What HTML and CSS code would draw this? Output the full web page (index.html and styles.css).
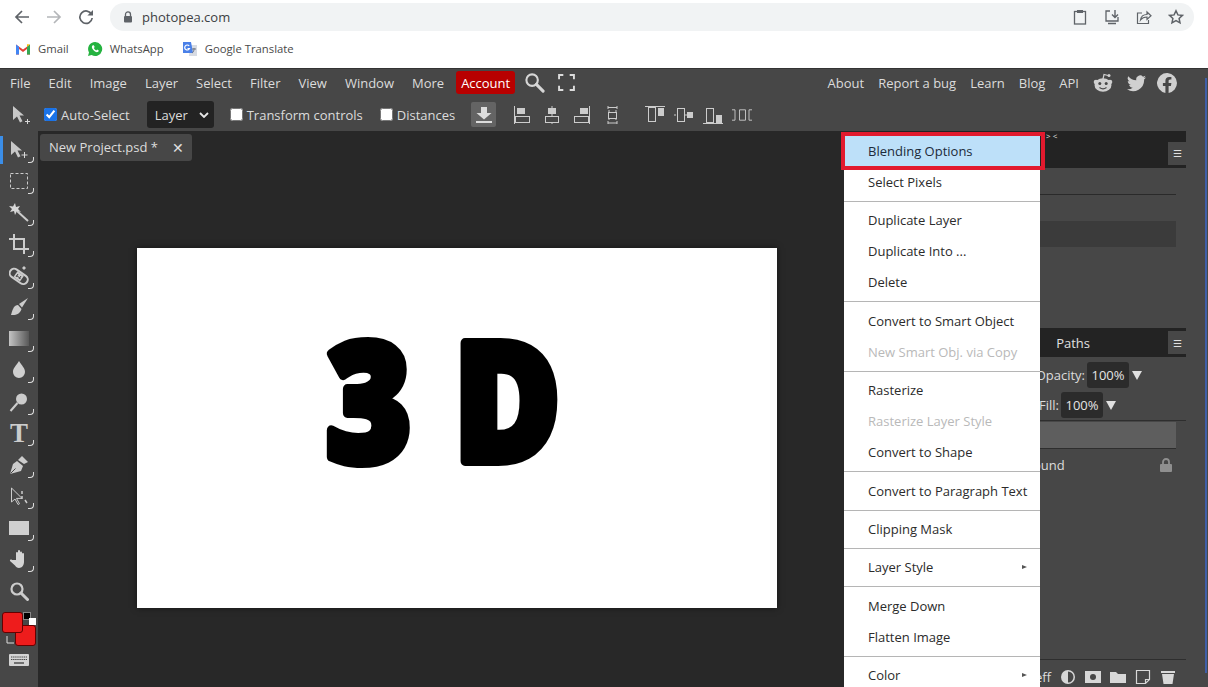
FILE: index.html
```html
<!DOCTYPE html>
<html lang="en">
<head>
    <meta charset="UTF-8">
    <meta name="viewport" content="width=device-width, initial-scale=1.0">
    <title>Photopea</title>
    <link rel="stylesheet" href="styles.css">
</head>
<body>
    <header class="browser">
        <div class="nav-row">
            <svg class="nav-ic" viewBox="0 0 16 16"><path d="M15 8H2M8 2 2 8l6 6" fill="none" stroke="#5f6368" stroke-width="1.7"/></svg>
            <svg class="nav-ic" viewBox="0 0 16 16"><path d="M1 8h13M8 2l6 6-6 6" fill="none" stroke="#b4b6b9" stroke-width="1.7"/></svg>
            <svg class="nav-ic" viewBox="0 0 16 16"><path d="M13.6 5.4A6.2 6.2 0 1 0 14.2 9" fill="none" stroke="#5f6368" stroke-width="1.7"/><path d="M15 1v5.6H9.4z" fill="#5f6368"/></svg>
            <div class="omnibox">
                <svg class="lock" viewBox="0 0 10 12"><path d="M2.5 5V3.4a2.5 2.5 0 0 1 5 0V5" fill="none" stroke="#5f6368" stroke-width="1.3"/><rect x="1" y="5" width="8" height="6.5" rx="1" fill="#5f6368"/></svg>
                <span class="url">photopea.com</span>
                <div class="omni-icons">
                    <svg class="omni-ic" viewBox="0 0 16 16"><rect x="2.5" y="2.5" width="11" height="12.5" fill="none" stroke="#5f6368" stroke-width="1.3"/><rect x="5" y="1" width="6" height="3" fill="#5f6368"/></svg>
                    <svg class="omni-ic" viewBox="0 0 16 16"><path d="M6 2H2v10h12V8" fill="none" stroke="#5f6368" stroke-width="1.3"/><path d="M11 1v7M8 5.5l3 3 3-3" fill="none" stroke="#5f6368" stroke-width="1.4"/><path d="M4 14.5h8" stroke="#5f6368" stroke-width="1.5"/></svg>
                    <svg class="omni-ic" viewBox="0 0 16 16"><path d="M6 4H1.5v10.500h11V11" fill="none" stroke="#5f6368" stroke-width="1.2"/><path d="M4.500 11c.5-4 3-5.500 6.500-5.500V3l4 3.800-4 3.700V8c-3 0-5 1-6.500 3z" fill="none" stroke="#5f6368" stroke-width="1.2"/></svg>
                    <svg class="omni-ic" viewBox="0 0 16 16"><path d="m8 1.800 1.900 4.100 4.500.5-3.300 3 .9 4.400L8 11.600l-4 2.200.9-4.400-3.300-3 4.500-.5z" fill="none" stroke="#5f6368" stroke-width="1.5"/></svg>
                </div>
            </div>
        </div>
        <div class="bookmarks">
            <span class="bookmark">
                <svg class="bm-ic" viewBox="0 0 16 13"><path d="M1 12V2l7 5 7-5v10h-3V6.500L8 9.500 4 6.500V12z" fill="#e34234"/><path d="M1 12V2l3 2.300V12z" fill="#4285f4"/><path d="M15 12V2l-3 2.300V12z" fill="#34a853"/><path d="m12 1.800 3 .2-3 2.300z" fill="#fbbc05"/></svg>
                Gmail
            </span>
            <span class="bookmark">
                <svg class="bm-ic" viewBox="0 0 16 16"><path d="M8 1a7 7 0 0 0-6 10.500L1 15l3.600-1A7 7 0 1 0 8 1z" fill="#25b340"/><path d="M5.500 4.500c-1 1-.8 2.600.6 4.300 1.500 1.800 3.300 2.800 4.600 2.300.8-.3 1.200-1 1-1.500L10.200 8.500l-1 .9C8.300 9 7.300 8 6.900 7l.8-1L6.800 4.300c-.4-.1-.9 0-1.300.2z" fill="#fff"/></svg>
                WhatsApp
            </span>
            <span class="bookmark">
                <svg class="bm-ic" viewBox="0 0 16 16"><path d="M8 4h7v11H7z" fill="#d7dbe3"/><path d="M1 1h8l2 11H1z" fill="#4a80e8"/><path d="M7.200 5A2.500 2.500 0 1 0 7.500 7.500H5.500" fill="none" stroke="#fff" stroke-width="1.200"/><path d="M10 8h4M12 7v1.500c-.3 2-1 3-2 3.500" fill="none" stroke="#6b7280" stroke-width="1"/></svg>
                Google Translate
            </span>
        </div>
    </header>

    <div class="app">
        <nav class="menubar">
            <span class="menu-item">File</span>
            <span class="menu-item">Edit</span>
            <span class="menu-item">Image</span>
            <span class="menu-item">Layer</span>
            <span class="menu-item">Select</span>
            <span class="menu-item">Filter</span>
            <span class="menu-item">View</span>
            <span class="menu-item">Window</span>
            <span class="menu-item">More</span>
            <span class="account">Account</span>
            <svg class="search-ic" viewBox="0 0 22 22"><circle cx="8.500" cy="8.500" r="6" fill="none" stroke="#d6d6d6" stroke-width="2.200"/><path d="m13 13 7 7" stroke="#d6d6d6" stroke-width="3.200" stroke-linecap="round"/></svg>
            <svg class="full-ic" viewBox="0 0 16 16"><path d="M1 5V1h4M11 1h4v4M15 11v4h-4M5 15H1v-4" fill="none" stroke="#dcdcdc" stroke-width="1.800"/></svg>
            <div class="menu-right">
                <span class="link">About</span>
                <span class="link">Report a bug</span>
                <span class="link">Learn</span>
                <span class="link">Blog</span>
                <span class="link">API</span>
                <svg class="social social-reddit" viewBox="0 0 20 20"><circle cx="3" cy="9" r="2.300" fill="#d0d0d0"/><circle cx="17" cy="9" r="2.300" fill="#d0d0d0"/><ellipse cx="10" cy="12" rx="8.500" ry="6.800" fill="#d0d0d0"/><path d="M10 6 11 1.500l4 1" fill="none" stroke="#d0d0d0" stroke-width="1.200"/><circle cx="16" cy="2.500" r="1.500" fill="#d0d0d0"/><circle cx="6.800" cy="10.500" r="1.500" fill="#474747"/><circle cx="13.200" cy="10.500" r="1.500" fill="#474747"/><path d="M6.500 14.500c2 1.500 5 1.500 7 0" fill="none" stroke="#474747" stroke-width="1.100"/></svg>
                <svg class="social social-twitter" viewBox="0 0 20 20"><path d="M20 4c-.7.300-1.500.600-2.400.700.9-.5 1.500-1.300 1.800-2.300-.8.500-1.700.8-2.600 1A4.100 4.100 0 0 0 9.800 7.200 11.600 11.600 0 0 1 1.400 2.900a4.100 4.100 0 0 0 1.300 5.500c-.7 0-1.300-.2-1.900-.5 0 2 1.400 3.700 3.300 4.100-.6.200-1.200.2-1.900.1.500 1.600 2 2.800 3.800 2.800A8.200 8.200 0 0 1 0 16.600 11.600 11.600 0 0 0 18 6.300c.8-.6 1.500-1.400 2-2.300z" fill="#d0d0d0"/></svg>
                <svg class="social" viewBox="0 0 20 20"><path d="M20 10a10 10 0 1 0-11.600 9.900v-7H5.900V10h2.500V7.800c0-2.500 1.500-3.900 3.800-3.900 1.100 0 2.200.2 2.200.2v2.500h-1.200c-1.200 0-1.600.8-1.600 1.600V10h2.800l-.5 2.900h-2.300v7A10 10 0 0 0 20 10z" fill="#d0d0d0"/></svg>
            </div>
        </nav>

        <div class="options">
            <svg class="opt-move" viewBox="0 0 20 20"><path d="M1 1v14l4-3.500 3 6 2.500-1.200-3-5.800H12z" fill="#c8c8c8"/><path d="M15.500 14v5M13 16.500h5" stroke="#d8d8d8" stroke-width="1"/></svg>
            <label class="check check-first"><input type="checkbox" checked>Auto-Select</label>
            <div class="select">Layer
                <svg class="chevron" viewBox="0 0 10 6"><path d="m1 1 4 4 4-4" fill="none" stroke="#e8e8e8" stroke-width="1.800"/></svg>
            </div>
            <label class="check"><input type="checkbox">Transform controls</label>
            <label class="check"><input type="checkbox">Distances</label>
            <span class="download">
                <svg viewBox="0 0 18 18" width="18" height="18"><path d="M6 1h6v6h4.500L9 13.500 1.500 7H6z" fill="#dcdcdc"/><path d="M1 16h16" stroke="#dcdcdc" stroke-width="2"/></svg>
            </span>
            <div class="aligns aligns-h">
                <svg viewBox="0 0 18 20"><path d="M1.500 1v18" stroke="#ccc"/><rect x="4" y="3" width="8" height="6" fill="#ccc"/><rect x="2.500" y="11.500" width="14" height="6" fill="none" stroke="#ccc"/></svg>
                <svg viewBox="0 0 18 20"><path d="M9 1v2M9 9v2M9 18v1" stroke="#ccc"/><rect x="5" y="3" width="8" height="6" fill="#ccc"/><rect x="2.500" y="11.500" width="13" height="6" fill="none" stroke="#ccc"/></svg>
                <svg viewBox="0 0 18 20"><path d="M16.500 1v18" stroke="#ccc"/><rect x="7" y="3" width="8" height="6" fill="#ccc"/><rect x="1.500" y="11.500" width="14" height="6" fill="none" stroke="#ccc"/></svg>
                <svg viewBox="0 0 18 20"><path d="M5 2.500h9M5 6h2M12 6h2M5 14h2M12 14h2M5 18h9M5 1v3M14 1v3M5 16v3M14 16v3" stroke="#ccc"/><rect x="5.500" y="7.500" width="8" height="6" fill="none" stroke="#ccc"/></svg>
            </div>
            <div class="aligns aligns-v">
                <svg viewBox="0 0 20 20"><path d="M0 1.500h20" stroke="#ccc"/><rect x="3.500" y="2.500" width="7" height="14" fill="none" stroke="#ccc"/><rect x="13" y="3" width="6" height="8" fill="#ccc"/></svg>
                <svg viewBox="0 0 20 20"><path d="M0 10h2M11 10h3" stroke="#ccc"/><rect x="3.500" y="3.500" width="7" height="13" fill="none" stroke="#ccc"/><rect x="13" y="7" width="6" height="6" fill="#ccc"/></svg>
                <svg viewBox="0 0 20 20"><path d="M0 18.500h20" stroke="#ccc"/><rect x="3.500" y="3.500" width="7" height="14" fill="none" stroke="#ccc"/><rect x="13" y="10" width="6" height="8" fill="#ccc"/></svg>
                <svg viewBox="0 0 20 20"><path d="M0 3.500h3v13H0M7.500 3.500h6v13h-6zM20 3.500h-3v13h3" transform="translate(0 2) scale(1 .8)" fill="none" stroke="#ccc"/></svg>
            </div>
        </div>

        <div class="workspace">
            <aside class="tools">
                <span class="tool tool-active"><svg viewBox="0 0 20 20"><path d="M2 1v14l4-3.500 3 6 2.500-1.200-3-5.800H13z" fill="#c8c8c8"/><path d="M15.500 12v6M12.500 15h6" stroke="#d8d8d8"/></svg></span>
                <span class="tool"><svg viewBox="0 0 20 20"><rect x="1.500" y="2.500" width="17" height="15" fill="none" stroke="#ccc" stroke-dasharray="3 2"/></svg></span>
                <span class="tool"><svg viewBox="0 0 20 20"><path d="m8 8 11 10" stroke="#ccc" stroke-width="2"/><path d="m6 0 1 4 4-1-2 3 3 3-4-1-2 4-1-4-4 1 2-3-3-3 4 .500z" fill="#d8d8d8"/></svg></span>
                <span class="tool"><svg viewBox="0 0 20 20"><path d="M5 0v15h15M0 5h15v15" fill="none" stroke="#ccc" stroke-width="2"/></svg></span>
                <span class="tool"><svg viewBox="0 0 20 20"><rect x="0" y="6" width="20" height="9" rx="4.500" transform="rotate(35 10 10)" fill="none" stroke="#ccc" stroke-width="2"/><rect x="6" y="7" width="8" height="7" transform="rotate(35 10 10)" fill="#ccc"/><path d="M7.500 9.500l4 3M9 8l-2 3M12 10l-2 3" stroke="#474747"/><path d="m15 0 2 2-2 2-2-2z" fill="#ccc"/></svg></span>
                <span class="tool"><svg viewBox="0 0 20 20"><path d="M19 1 10 7l3 3.500z" fill="#ccc"/><path d="M9 8c-4 .500-5 3-7 10 5 .500 9-1 10.500-6z" fill="#ccc"/></svg></span>
                <span class="tool gradient-tool"></span>
                <span class="tool"><svg viewBox="0 0 20 20"><path d="M10 1c-3 5-6 7-6 11a6 6 0 0 0 12 0c0-4-3-6-6-11z" fill="#d0d0d0"/></svg></span>
                <span class="tool"><svg viewBox="0 0 20 20"><circle cx="12.500" cy="7" r="5.500" fill="#ccc"/><path d="m8.500 11-7 8" stroke="#ccc" stroke-width="2"/></svg></span>
                <span class="tool type-tool">T</span>
                <span class="tool"><svg viewBox="0 0 20 20"><path d="m13 1 6 6-4 2-6-4z" fill="#ccc"/><path d="m8 6 6 5-2 5-11 3 3-10z" fill="#ccc"/><path d="m1.500 18.500 5-5" stroke="#474747"/></svg></span>
                <span class="tool"><svg viewBox="0 0 20 20"><path d="M2.500 2v14l3.500-3 3 5.500 1.500-.8-3-5.300H13z" fill="none" stroke="#ccc"/><path d="M13 5v3M13 10v3M16 14l2 3" stroke="#ccc" stroke-width="1.500"/></svg></span>
                <span class="tool"><span class="shape-rect"></span></span>
                <span class="tool"><svg viewBox="0 0 20 20"><path d="M7 11V4a1 1 0 0 1 2 0V2a1 1 0 0 1 2 0v1.500a1 1 0 0 1 2 0V5a1 1 0 0 1 2 0v8c0 3-2 6-5 6-2 0-3-1-4-2.500L1 12c-.5-1 1-2 2-1z" fill="#d4d4d4"/></svg></span>
                <span class="tool tool-plain"><svg viewBox="0 0 20 20"><circle cx="8" cy="8" r="5.500" fill="none" stroke="#ccc" stroke-width="2.200"/><path d="m12 12 6.500 6.500" stroke="#ccc" stroke-width="3" stroke-linecap="round"/></svg></span>
                <div class="swatches">
                    <span class="swatch-bg"></span>
                    <span class="swatch-fg"></span>
                    <span class="mini-black"></span>
                    <span class="mini-white"></span>
                    <svg class="swap" viewBox="0 0 10 10"><path d="M2 1v7h7" fill="none" stroke="#ddd"/></svg>
                </div>
                <svg class="keyboard" viewBox="0 0 20 12"><rect width="20" height="12" rx="1" fill="#d4d4d4"/><path d="M2 3h16M2 5.500h16" stroke="#474747" stroke-dasharray="1.400 .7"/><path d="M5 9h10" stroke="#474747" stroke-width="1.400"/></svg>
            </aside>

            <main class="doc">
                <div class="tab">New Project.psd *<span class="tab-close">✕</span></div>
                <div class="canvas">
                    <svg class="art" viewBox="0 0 640 360">
                        <text class="art-text" transform="scale(.88 1)" y="213"><tspan x="215">3</tspan> <tspan x="360">D</tspan></text>
                    </svg>
                </div>
            </main>

            <section class="panels">
                <div class="panel-tabs panel-tabs-top">
                    <span class="burger">☰</span>
                </div>
                <div class="panel-top">
                    <div class="panel-row-line"></div>
                    <div class="panel-field"></div>
                </div>
                <div class="panel-tabs panel-tabs-layers">
                    <span class="tab-label">Paths</span>
                    <span class="burger">☰</span>
                </div>
                <div class="blend-row blend-opacity">Opacity:<span class="num-box">100%</span><span class="tri"></span></div>
                <div class="blend-row blend-fill">Fill:<span class="num-box">100%</span><span class="tri"></span></div>
                <div class="layers-rule"></div>
                <div class="layer-selected"></div>
                <div class="layer-row">Background
                    <svg class="layer-lock" viewBox="0 0 12 14"><path d="M3 6V4a3 3 0 0 1 6 0v2" fill="none" stroke="#8f8f8f" stroke-width="1.800"/><rect y="6" width="12" height="8" rx="1" fill="#8f8f8f"/></svg>
                </div>
                <div class="panel-foot">
                    <span>eff</span>
                    <svg viewBox="0 0 16 16"><circle cx="8" cy="8" r="7" fill="#d8d8d8"/><path d="M8 2.500a5.500 5.500 0 0 1 0 11z" fill="#474747"/></svg>
                    <svg viewBox="0 0 16 16"><rect y="2" width="16" height="12" fill="#d8d8d8"/><circle cx="8" cy="8" r="3" fill="#474747"/></svg>
                    <svg viewBox="0 0 16 16"><path d="M0 3h6l2 2h8v9H0z" fill="#d8d8d8"/></svg>
                    <svg viewBox="0 0 16 16"><path d="M1.500 1.500h13v9l-4 4h-9zM10.500 14.500v-4h4" fill="none" stroke="#d8d8d8" stroke-width="1.200"/></svg>
                    <svg viewBox="0 0 16 16"><path d="M1 2h14v2H1zM2 5h12l-1.500 10h-9z" fill="#d8d8d8"/></svg>
                </div>
            </section>
            <div class="strip"></div>

            <div class="context-menu">
                <div class="ctx ctx-hover">Blending Options</div>
                <div class="ctx">Select Pixels</div>
                <div class="ctx-sep"></div>
                <div class="ctx">Duplicate Layer</div>
                <div class="ctx">Duplicate Into ...</div>
                <div class="ctx">Delete</div>
                <div class="ctx-sep"></div>
                <div class="ctx">Convert to Smart Object</div>
                <div class="ctx ctx-off">New Smart Obj. via Copy</div>
                <div class="ctx-sep"></div>
                <div class="ctx">Rasterize</div>
                <div class="ctx ctx-off">Rasterize Layer Style</div>
                <div class="ctx">Convert to Shape</div>
                <div class="ctx-sep"></div>
                <div class="ctx">Convert to Paragraph Text</div>
                <div class="ctx-sep"></div>
                <div class="ctx">Clipping Mask</div>
                <div class="ctx-sep"></div>
                <div class="ctx ctx-sub">Layer Style</div>
                <div class="ctx-sep"></div>
                <div class="ctx">Merge Down</div>
                <div class="ctx">Flatten Image</div>
                <div class="ctx-sep"></div>
                <div class="ctx ctx-sub">Color</div>
            </div>
            <div class="red-mark"></div>
            <span class="collapse-mark">&gt; &lt;</span>
        </div>
        <div class="edge-line"></div>
    </div>
</body>
</html>
```

FILE: styles.css
```css
html, body {
    height: 687px;
    overflow: hidden;
}

body {
    margin: 0;
    display: flex;
    flex-direction: column;
    font-family: "Open Sans", "Liberation Sans", sans-serif;
    font-size: 13px;
    background: #fff;
}

/* browser chrome */
.browser {
    height: 68px;
    flex: none;
    background: #fff;
}

.nav-row {
    height: 33px;
    display: flex;
    align-items: center;
    padding: 0 14px;
}

.nav-ic {
    width: 16px;
    height: 16px;
    margin-right: 16px;
}

.omnibox {
    flex: 1;
    height: 28px;
    padding: 0 10px 0 13px;
    display: flex;
    align-items: center;
    background: #f1f3f4;
    border-radius: 14px;
}

.lock {
    width: 10px;
    height: 12px;
    margin-right: 9px;
}

.url {
    color: #3c4043;
    font-size: 13px;
}

.omni-icons {
    margin-left: auto;
    display: flex;
    gap: 16px;
}

.omni-ic {
    width: 16px;
    height: 16px;
}

.bookmarks {
    height: 31px;
    display: flex;
    align-items: center;
    padding-left: 15px;
    gap: 18px;
}

.bookmark {
    display: flex;
    align-items: center;
    gap: 7px;
    color: #4a4a4a;
    font-size: 11.3px;
}

.bm-ic {
    width: 16px;
    height: 16px;
}

/* app shell */
.app {
    position: relative;
    flex: 1;
    display: flex;
    flex-direction: column;
    min-height: 0;
    background: #474747;
    color: #dcdcdc;
    border-top: 1px solid #333;
}

.menubar {
    height: 27px;
    padding: 0 0 2px 1px;
    flex: none;
    display: flex;
    align-items: center;
}

.menu-item {
    padding: 0 9px;
}

.account {
    margin-left: 3px;
    padding: 2.5px 5px;
    background: #b80000;
    border-radius: 3px;
    color: #fff;
}

.search-ic {
    width: 21px;
    height: 21px;
    margin-left: 9px;
}

.full-ic {
    width: 17px;
    height: 17px;
    margin-left: 13px;
}

.menu-right {
    margin-left: auto;
    display: flex;
    align-items: center;
    gap: 14px;
    padding-right: 31px;
}

.social {
    width: 20px;
    height: 20px;
}

.social-twitter {
    width: 19px;
    margin-right: -3px;
}

.options {
    height: 33px;
    flex: none;
    display: flex;
    align-items: center;
    padding-left: 12px;
}

.opt-move {
    width: 20px;
    height: 20px;
}

.check {
    display: flex;
    align-items: center;
    margin-left: 17px;
}

.check-first {
    margin-left: 12px;
}

.check input {
    width: 13px;
    height: 13px;
    margin: 0 4px 0 0;
    accent-color: #1a73e8;
}

.select {
    width: 67px;
    height: 27px;
    margin-left: 17px;
    margin-right: -1px;
    padding-left: 8px;
    box-sizing: border-box;
    display: flex;
    align-items: center;
    background: #232323;
    border-radius: 3px;
}

.chevron {
    width: 10px;
    height: 6px;
    margin-left: auto;
    margin-right: 5px;
}

.download {
    width: 25px;
    height: 25px;
    margin-left: 16px;
    display: grid;
    place-items: center;
    background: #646464;
    border-radius: 2px;
}

.aligns {
    display: flex;
}

.aligns svg {
    width: 18px;
    height: 20px;
}

.aligns-h {
    margin-left: 17px;
    gap: 12px;
}

.aligns-v {
    margin-left: 24px;
    gap: 9px;
}

.aligns-v svg {
    width: 20px;
}

/* workspace */
.workspace {
    position: relative;
    flex: 1;
    display: flex;
    min-height: 0;
}

.tools {
    width: 38px;
    flex: none;
    display: flex;
    flex-direction: column;
    align-items: center;
    background: #474747;
    padding-top: 3px;
}

.tool {
    position: relative;
    width: 38px;
    height: 31.5px;
    flex: none;
    display: flex;
    align-items: center;
    justify-content: center;
}

.tool svg {
    width: 20px;
    height: 20px;
}

.tool::after {
    content: "";
    position: absolute;
    right: 4px;
    bottom: 3px;
    width: 5px;
    height: 5px;
    border-right: 1px solid #ddd;
    border-bottom: 1px solid #ddd;
    border-bottom-right-radius: 4px;
}

.tool-plain::after {
    display: none;
}

.tool-active::before {
    content: "";
    position: absolute;
    left: 0;
    top: 2px;
    width: 3px;
    height: 28px;
    background: #3b8ee8;
}

.gradient-tool::before {
    content: "";
    width: 20px;
    height: 15px;
    background: linear-gradient(to right, #c4c4c4, #585858);
}

.type-tool {
    font-family: "Liberation Serif", serif;
    font-size: 27px;
    font-weight: 700;
    color: #ccc;
}

.shape-rect {
    width: 20px;
    height: 14px;
    background: #d0d0d0;
}

.swatches {
    position: relative;
    width: 38px;
    height: 38px;
    flex: none;
    margin-top: 5px;
}

.swatch-fg,
.swatch-bg,
.mini-black,
.mini-white {
    position: absolute;
    box-sizing: border-box;
}

.swatch-fg {
    left: 2px;
    top: 0;
    width: 21px;
    height: 21px;
    background: #ee1c1c;
    border: 1px solid #600;
    border-radius: 3px;
}

.swatch-bg {
    left: 15px;
    top: 13px;
    width: 21px;
    height: 21px;
    background: #ee1c1c;
    border: 1px solid #600;
    border-radius: 3px;
}

.mini-black {
    left: 23px;
    top: 0;
    width: 8px;
    height: 8px;
    background: #000;
    border: 1px solid #888;
}

.mini-white {
    left: 29px;
    top: 6px;
    width: 7px;
    height: 7px;
    background: #fff;
}

.swap {
    position: absolute;
    left: 5px;
    top: 23px;
    width: 10px;
    height: 10px;
}

.keyboard {
    width: 20px;
    height: 12px;
    margin-top: 4px;
}

.doc {
    flex: 1;
    min-width: 0;
    display: flex;
    flex-direction: column;
    align-items: flex-start;
    background: #282828;
}

.tab {
    height: 26px;
    margin: 3px 0 0 2px;
    padding: 0 8px 1px 9px;
    display: flex;
    align-items: center;
    background: #474747;
    border-radius: 3px;
}

.tab-close {
    margin-left: 14px;
    font-size: 14px;
    color: #e0e0e0;
}

.canvas {
    align-self: center;
    width: 640px;
    height: 360px;
    margin-top: 87px;
    background: #fff;
    box-shadow: 0 0 6px rgba(0, 0, 0, 0.5);
}

.art {
    display: block;
    width: 640px;
    height: 360px;
}

.art-text {
    font-family: "Open Sans", sans-serif;
    font-weight: 800;
    font-size: 165px;
    fill: #000;
    stroke: #000;
    stroke-width: 10px;
    stroke-linejoin: round;
}

.panels {
    width: 310px;
    flex: none;
    display: flex;
    flex-direction: column;
    background: #474747;
}

.panel-tabs {
    display: flex;
    align-items: center;
    justify-content: flex-end;
    background: #232323;
}

.panel-tabs-top {
    height: 37px;
}

.panel-tabs-layers {
    height: 29px;
}

.burger {
    width: 18px;
    height: 23px;
    display: grid;
    place-items: center;
    background: #474747;
    font-size: 10px;
    color: #e0e0e0;
}

.panel-tabs-top .burger {
    margin-top: 7px;
}

.panel-top {
    height: 160px;
}

.panel-row-line {
    height: 1px;
    margin: 26px 10px 0 0;
    background: #2a2a2a;
}

.panel-field {
    height: 26px;
    margin: 26px 10px 0 0;
    background: #3b3b3b;
}

.tab-label {
    margin-right: 78px;
    color: #e0e0e0;
}

.blend-row {
    flex: none;
    display: flex;
    align-items: center;
    justify-content: flex-end;
}

.blend-opacity {
    height: 36px;
    padding-right: 44px;
}

.blend-fill {
    height: 26px;
    margin-top: -1px;
    padding-right: 70px;
}

.num-box {
    width: 42px;
    height: 26px;
    margin: 0 3px 0 2px;
    display: grid;
    place-items: center;
    background: #2b2b2b;
    border-radius: 3px;
    color: #e4e4e4;
}

.tri {
    width: 0;
    height: 0;
    border-left: 5px solid transparent;
    border-right: 5px solid transparent;
    border-top: 9px solid #e0e0e0;
}

.layers-rule {
    height: 1px;
    flex: none;
    margin-top: 2px;
    background: #2e2e2e;
}

.layer-selected {
    height: 26px;
    flex: none;
    margin: 1px 10px 0 0;
    background: #5e5e5e;
    border-bottom: 1px solid #2e2e2e;
}

.layer-row {
    height: 32px;
    flex: none;
    display: flex;
    align-items: center;
    padding-left: 116px;
    padding-right: 14px;
}

.layer-lock {
    width: 12px;
    height: 14px;
    margin-left: auto;
}

.panel-foot {
    margin-top: auto;
    height: 21px;
    flex: none;
    display: flex;
    align-items: center;
    justify-content: flex-end;
    gap: 9px;
    padding: 6px 10px 0 0;
    border-top: 1px solid #2e2e2e;
}

.panel-foot svg {
    width: 16px;
    height: 16px;
}

.strip {
    width: 22px;
    flex: none;
    background: #474747;
}

.edge-line {
    position: absolute;
    right: 1px;
    top: 9px;
    bottom: 14px;
    width: 2px;
    background: #3f5fa8;
}

/* layer context menu */
.context-menu {
    position: absolute;
    left: 844px;
    top: 5px;
    bottom: 0;
    width: 196px;
    overflow: hidden;
    background: #fff;
    color: #2b2b2b;
}

.ctx {
    position: relative;
    height: 31px;
    line-height: 31px;
    padding-left: 24px;
}

.ctx-hover {
    background: #bde0f9;
    color: #1c2a3a;
}

.ctx-off {
    color: #b9b9b9;
}

.ctx-sub::after {
    content: "";
    position: absolute;
    right: 13px;
    top: 13px;
    border-left: 5px solid #555;
    border-top: 2.5px solid transparent;
    border-bottom: 2.5px solid transparent;
}

.ctx-sep {
    height: 1px;
    margin: 3px 0 3.4px;
    background: #b5b5b5;
}

.red-mark {
    position: absolute;
    left: 841px;
    top: 1px;
    width: 204px;
    height: 38px;
    box-sizing: border-box;
    border: 4px solid #e21a2e;
}

.collapse-mark {
    position: absolute;
    left: 1046px;
    top: 0;
    font-size: 8px;
    line-height: 9px;
    color: #e0e0e0;
}
```
